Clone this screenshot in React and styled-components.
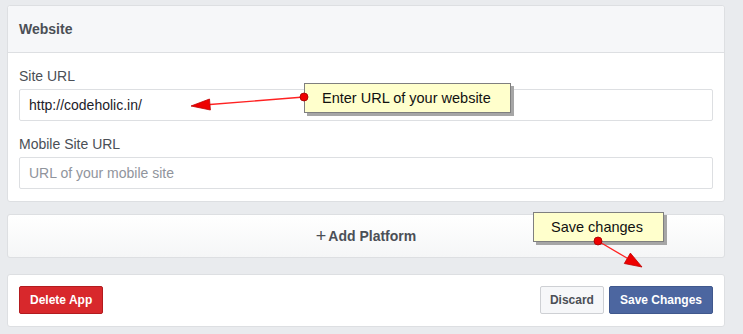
import React from "react";
import styled, { createGlobalStyle } from "styled-components";

const GlobalStyle = createGlobalStyle`
  html, body {
    margin: 0;
    padding: 0;
    background: #e9ebee;
  }
  body {
    font-family: "Liberation Sans", Arial, Helvetica, sans-serif;
  }
`;

const Page = styled.div`
  position: relative;
  width: 743px;
  height: 334px;
  box-sizing: border-box;
  padding: 5px 18px 0 7px;
  background: #e9ebee;
  overflow: hidden;
`;

const Card = styled.div`
  background: ${(p) =>
    p.$gradient ? "linear-gradient(#ffffff, #f5f6f7)" : "#ffffff"};
  border: 1px solid #dddfe2;
  border-radius: 3px;
  margin-bottom: ${(p) => p.$gap || 0}px;
`;

const CardHeader = styled.div`
  height: 46px;
  display: flex;
  align-items: center;
  padding: 0 11px;
  background: #f6f7f9;
  border-bottom: 1px solid #dddfe2;
  border-radius: 3px 3px 0 0;
  font-size: 14px;
  font-weight: bold;
  color: #4b4f56;
`;

const CardBody = styled.div`
  padding: 14px 11px 12px;
`;

const Field = styled.div`
  & + & {
    margin-top: 14px;
  }
`;

const Label = styled.div`
  font-size: 14px;
  line-height: 18px;
  color: #4b4f56;
  margin-bottom: 4px;
`;

const Input = styled.input`
  display: block;
  width: 100%;
  box-sizing: border-box;
  height: 32px;
  border: 1px solid #dddfe2;
  border-radius: 2px;
  padding: 0 9px;
  font-family: inherit;
  font-size: 14px;
  color: #1d2129;
  outline: none;
  &::placeholder {
    color: #90949c;
  }
`;

const AddPlatform = styled.div`
  height: 42px;
  display: flex;
  align-items: center;
  justify-content: center;
  font-size: 14px;
  font-weight: bold;
  color: #4b4f56;
  gap: 2px;
`;

const Plus = styled.span`
  font-size: 18px;
  font-weight: normal;
  line-height: 1;
  margin-top: -1px;
`;

const Footer = styled.div`
  height: 51px;
  display: flex;
  align-items: center;
  padding: 0 11px 1px;
  box-sizing: border-box;
  gap: 5px;
`;

const Spacer = styled.div`
  flex: 1;
`;

const Button = styled.button`
  height: 28px;
  box-sizing: border-box;
  padding: 0 ${(p) => p.$pad || 10}px;
  border-radius: 2px;
  font-family: inherit;
  font-size: 12px;
  font-weight: bold;
  cursor: pointer;
  ${(p) =>
    p.$kind === "danger" &&
    `
    background: #d8282c;
    border: 1px solid #b31b1f;
    color: #ffffff;
  `}
  ${(p) =>
    p.$kind === "plain" &&
    `
    background: #f6f7f9;
    border: 1px solid #ced0d4;
    color: #4b4f56;
  `}
  ${(p) =>
    p.$kind === "primary" &&
    `
    background: #4c66a0;
    border: 1px solid #40588d;
    color: #ffffff;
  `}
`;

const Callout = styled.div`
  position: absolute;
  left: ${(p) => p.$x}px;
  top: ${(p) => p.$y}px;
  width: ${(p) => p.$w}px;
  height: ${(p) => p.$h}px;
  box-sizing: border-box;
  background: #ffffcc;
  border: 1px solid #7f7f7f;
  box-shadow: 3px 3px 0 #a6a6a6;
  padding-left: ${(p) => p.$pad}px;
  display: flex;
  align-items: center;
  font-size: 14.5px;
  color: #111111;
`;

const Overlay = styled.svg`
  position: absolute;
  left: 0;
  top: 0;
  pointer-events: none;
`;

function Arrow({ from, tip, base1, base2 }) {
  return (
    <g>
      <line
        x1={from[0]}
        y1={from[1]}
        x2={(base1[0] + base2[0]) / 2}
        y2={(base1[1] + base2[1]) / 2}
        stroke="#f22"
        strokeWidth="1.3"
      />
      <polygon
        points={`${tip.join(",")} ${base1.join(",")} ${base2.join(",")}`}
        fill="#ee0000"
        stroke="#c00000"
        strokeWidth="0.8"
      />
      <circle cx={from[0]} cy={from[1]} r="4" fill="#ee0000" stroke="#a00000" strokeWidth="0.8" />
    </g>
  );
}

export default function App() {
  return (
    <>
      <GlobalStyle />
      <Page>
        <Card $gap={12}>
          <CardHeader>Website</CardHeader>
          <CardBody>
            <Field>
              <Label>Site URL</Label>
              <Input defaultValue="http://codeholic.in/" />
            </Field>
            <Field>
              <Label>Mobile Site URL</Label>
              <Input placeholder="URL of your mobile site" />
            </Field>
          </CardBody>
        </Card>
        <Card $gradient $gap={16}>
          <AddPlatform>
            <Plus>+</Plus>Add Platform
          </AddPlatform>
        </Card>
        <Card>
          <Footer>
            <Button $kind="danger" $pad={10}>Delete App</Button>
            <Spacer />
            <Button $kind="plain" $pad={9}>Discard</Button>
            <Button $kind="primary" $pad={10}>Save Changes</Button>
          </Footer>
        </Card>

        <Callout $x={304} $y={83} $w={207} $h={30} $pad={17}>
          Enter URL of your website
        </Callout>
        <Callout $x={533} $y={212} $w={131} $h={30} $pad={17}>
          Save changes
        </Callout>
        <Overlay width="743" height="334" viewBox="0 0 743 334">
          <Arrow from={[304, 97]} tip={[191, 106]} base1={[210.4, 110]} base2={[209.5, 99]} />
          <Arrow from={[598, 241]} tip={[642, 267]} base1={[624.3, 263.5]} base2={[630.4, 253.1]} />
        </Overlay>
      </Page>
    </>
  );
}
